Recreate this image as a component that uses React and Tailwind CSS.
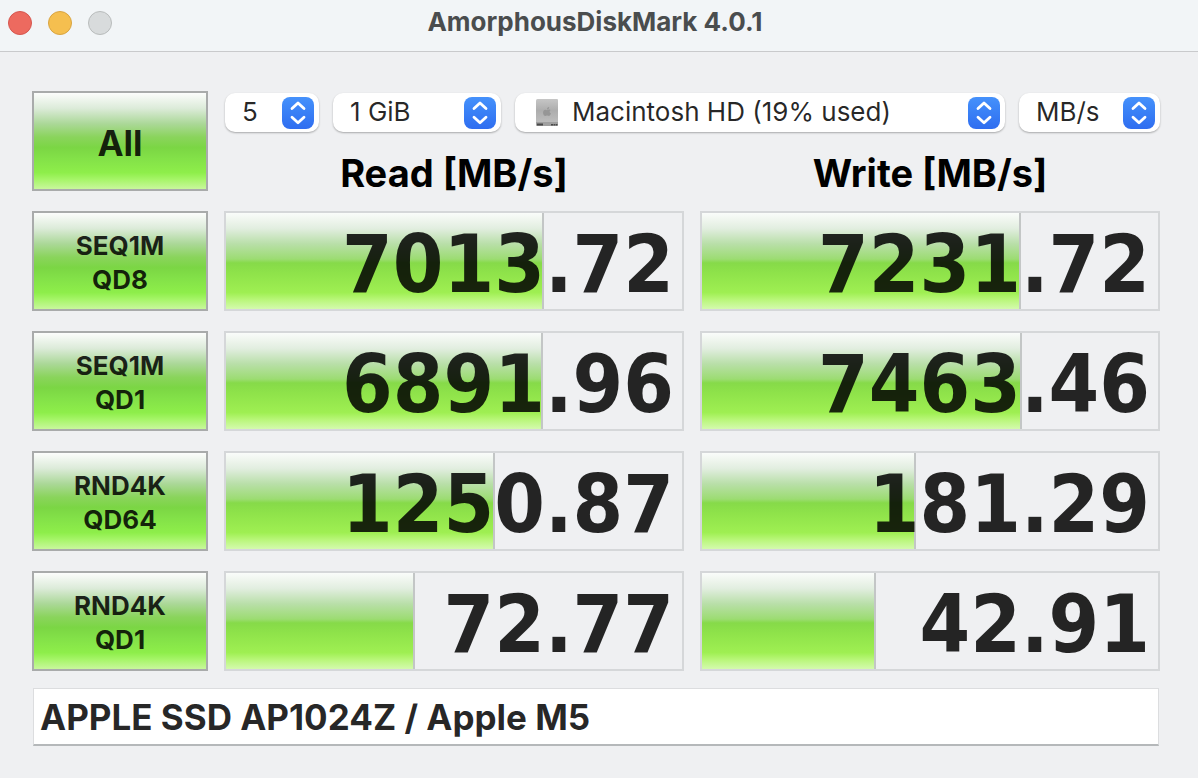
import React, { useState } from 'react';

const tests = [
  { id: 'seq1m-qd8', name: 'SEQ1M', queue: 'QD8', read: ['7013.72', 69.7], write: ['7231.72', 70] },
  { id: 'seq1m-qd1', name: 'SEQ1M', queue: 'QD1', read: ['6891.96', 69.6], write: ['7463.46', 70.2] },
  { id: 'rnd4k-qd64', name: 'RND4K', queue: 'QD64', read: ['1250.87', 59], write: ['181.29', 47] },
  { id: 'rnd4k-qd1', name: 'RND4K', queue: 'QD1', read: ['72.77', 41.4], write: ['42.91', 38.2] },
];

const buttonClass =
  'flex h-[100px] flex-col items-center justify-center border-2 border-[#a9abab] bg-[linear-gradient(to_bottom,#fcfdfc_0%,#dcebd9_16%,#abd898_32%,#8ad45c_46%,#7bd644_57%,#83e148_68%,#8eee4a_83%,#a6f568_90%,#c8f79c_100%)] pt-1 font-bold text-black/85';

const Chevrons = () => (
  <span className="pointer-events-none col-start-1 row-start-1 mr-[5px] flex h-8 w-8 items-center justify-center self-center justify-self-end rounded-lg bg-linear-to-b from-[#4591fb] to-[#2f6df0]">
    <svg viewBox="0 0 32 32" className="h-8 w-8" fill="none" stroke="white" strokeWidth="2.8" strokeLinecap="round" strokeLinejoin="round">
      <path d="M10 11.600 16 6l6 5.600M10 20.200l6 5.600 6-5.600" />
    </svg>
  </span>
);

const DriveIcon = () => (
  <svg viewBox="0 0 24 28" className="pointer-events-none col-start-1 row-start-1 ml-5 h-7 w-6 self-center">
    <defs>
      <linearGradient id="drive" x1="0" y1="0" x2="0" y2="1">
        <stop offset="0" stopColor="#c6c6c6" />
        <stop offset="0.5" stopColor="#adadad" />
        <stop offset="1" stopColor="#bcbcbc" />
      </linearGradient>
    </defs>
    <path d="M2.500 0h19.500q1 0 1 1v22H1V1.500q0-1.500 1.500-1.500z" fill="url(#drive)" />
    <path d="M1 23h22v3q0 1-1 1H2q-1 0-1-1z" fill="#a0a0a0" />
    <path d="M2 24.500h6v2H2zM16 25h2v1.500h-2zM18.500 25h2v1.500h-2zM21 25h1.500v1.500H21z" fill="#494949" />
    <path d="M12 11.200q-2-1-3.200.3c-1.600 1.900-.3 5.500 1.600 5.500.7 0 .9-.4 1.700-.4s1.100.4 1.700.4c1.100 0 1.900-1.400 2.200-2.400-1.800-.8-1.700-2.700-.3-3.500-1-1.200-2.300-.6-3.700.1zM12 10.400c0-1.400.8-2.300 2.200-2.500 0 1.400-.8 2.400-2.200 2.500z" fill="#969696" />
  </svg>
);

const PopUp = ({ label, option, className, textClass = 'pl-[17px]', icon }) => (
  <div className={`grid h-[39px] rounded-[10px] bg-white shadow-[0_1px_2px_rgba(0,0,0,0.3)] ${className}`}>
    <select
      aria-label={label}
      className={`col-start-1 row-start-1 w-full appearance-none rounded-[10px] bg-transparent pr-10 pb-0.5 text-[26px] leading-8 text-black/85 ${textClass}`}
    >
      <option>{option}</option>
    </select>
    {icon}
    <Chevrons />
  </div>
);

const Result = ({ label, result: [value, percent] }) => (
  <div role="group" aria-label={label} className="grid h-[100px] border-2 border-[#d5d7d9]">
    <div
      className="col-start-1 row-start-1 border-r-2 border-[#c3c6c6] bg-[linear-gradient(to_bottom,#fafcfa_0%,#e2eee0_16%,#b9dfa9_32%,#9cdc72_48%,#86da49_52%,#8fe34a_63%,#9fef52_83%,#b8f678_90%,#d4faae_100%)]"
      style={{ width: `${percent}%` }}
    />
    <output className="z-10 col-start-1 row-start-1 pt-1.5 pr-2 text-right font-['DejaVu_Sans_Condensed','DejaVu_Sans',sans-serif] text-[81px] leading-[90px] font-bold text-black/85">
      {value}
    </output>
  </div>
);

const App = () => {
  const [note, setNote] = useState('APPLE SSD AP1024Z / Apple M5');

  return (
    <div className="min-h-screen bg-[#eff0f2] font-[Inter,sans-serif]">
      <header className="grid h-[52px] grid-cols-[1fr_auto_1fr] items-center border-b border-[#c9cacc] bg-[#f2f5f7] pr-4 pl-2">
        <div className="flex gap-4 pb-1.5">
          <button aria-label="Close" className="h-6 w-6 rounded-full border border-[#d6564f] bg-[#ed6a5f]" />
          <button aria-label="Minimize" className="h-6 w-6 rounded-full border border-[#d9a441] bg-[#f5bf4f]" />
          <button aria-label="Zoom" disabled className="h-6 w-6 rounded-full border border-[#b9bcbc] bg-[#d8dbdc]" />
        </div>
        <h1 className="pb-2 text-[26px] leading-8 font-bold text-[#4a4d4e]">AmorphousDiskMark 4.0.1</h1>
      </header>

      <main className="px-8 pt-[39px] pb-8">
        <div className="mr-[6px] grid grid-cols-[176px_1fr_1fr] gap-x-4 gap-y-5">
          <button className={`${buttonClass} text-[35px]`}>All</button>
          <div className="col-span-2 flex h-[100px] flex-col justify-between">
            <div className="ml-px flex gap-[14px] pt-0.5">
              <PopUp label="Test count" option="5" className="w-[94px]" />
              <PopUp label="Test size" option="1 GiB" className="w-[168px]" />
              <PopUp
                label="Target volume"
                option="Macintosh HD (19% used)"
                className="flex-1"
                textClass="pl-[57px]"
                icon={<DriveIcon />}
              />
              <PopUp label="Unit" option="MB/s" className="w-[141px]" />
            </div>
            <div className="grid grid-cols-2 gap-x-4 text-center text-[38px] leading-[36px] font-bold text-black">
              <h2>Read [MB/s]</h2>
              <h2>Write [MB/s]</h2>
            </div>
          </div>

          {tests.map((test) => (
            <React.Fragment key={test.id}>
              <button className={`${buttonClass} text-[26px] leading-[34px]`}>
                <span>{test.name}</span>
                <span>{test.queue}</span>
              </button>
              <Result label={`${test.name} ${test.queue} read`} result={test.read} />
              <Result label={`${test.name} ${test.queue} write`} result={test.write} />
            </React.Fragment>
          ))}
        </div>

        <input
          type="text"
          aria-label="Comment"
          value={note}
          onChange={(e) => setNote(e.target.value)}
          className="mt-[17px] ml-px block h-[58px] w-[calc(100%-8px)] border border-b-2 border-[#dcdddf] border-b-[#b5b8ba] bg-white px-1.5 text-[35px] font-bold text-black/85"
        />
      </main>
    </div>
  );
};

export default App;
